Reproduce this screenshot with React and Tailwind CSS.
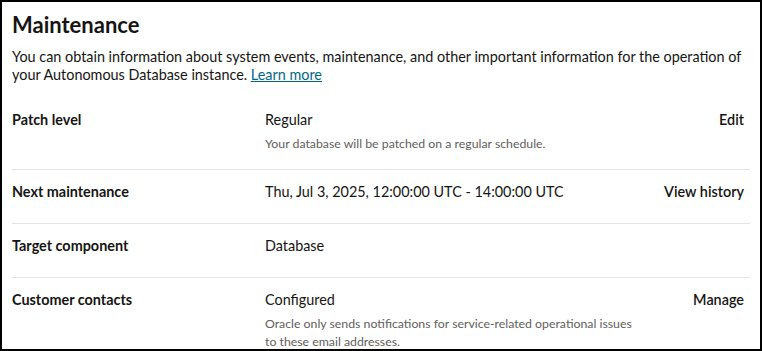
function Row({ label, value, helper, action, first }) {
  return (
    <div className={`flex items-start pt-3 pb-4 ${first ? "" : "border-t border-[#e4e4e4]"}`}>
      <div className="w-[253px] shrink-0 font-bold text-[14.4px] leading-5">{label}</div>
      <div className="w-[375px] shrink-0 min-h-[25px]">
        <div className="text-[14.4px] leading-5">{value}</div>
        {helper && (
          <div className="mt-[5px] text-[12.3px] leading-[18px] text-[#5f5e5c]">{helper}</div>
        )}
      </div>
      <div className="flex-1 flex justify-end pr-1.5">
        {action && (
          <button className="font-semibold text-[14.4px] leading-5 text-[#161513]">{action}</button>
        )}
      </div>
    </div>
  );
}

export default function App() {
  return (
    <div className="w-[762px] h-[351px] overflow-hidden bg-white border-2 border-black text-[#161513] font-['Lato',sans-serif]">
      <div className="px-2.5 pt-[9px]">
        <h1 className="text-[22px] leading-7 font-bold">Maintenance</h1>
        <p className="mt-[9px] text-[14.4px] leading-[18px]">
          You can obtain information about system events, maintenance, and other important information for the operation of your Autonomous Database instance.{" "}
          <a href="#" className="text-[#00688c] underline underline-offset-1">Learn more</a>
        </p>
        <div className="mt-[14px]">
          <Row
            first
            label="Patch level"
            value="Regular"
            helper="Your database will be patched on a regular schedule."
            action="Edit"
          />
          <Row
            label="Next maintenance"
            value="Thu, Jul 3, 2025, 12:00:00 UTC - 14:00:00 UTC"
            action="View history"
          />
          <Row label="Target component" value="Database" />
          <Row
            label="Customer contacts"
            value="Configured"
            helper="Oracle only sends notifications for service-related operational issues to these email addresses."
            action="Manage"
          />
        </div>
      </div>
    </div>
  );
}
